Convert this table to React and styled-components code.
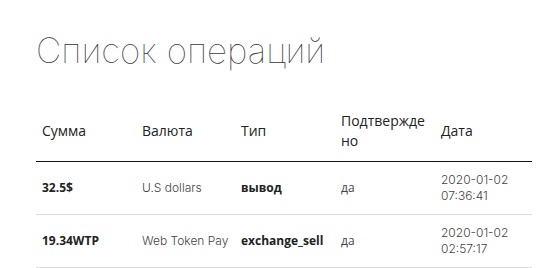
import React from "react";
import styled, { createGlobalStyle } from "styled-components";

const GlobalStyle = createGlobalStyle`
  body {
    margin: 0;
    background: #fff;
    font-family: "Open Sans", "Noto Sans", sans-serif;
  }
`;

const Page = styled.div`
  padding: 28px 26px 0 36px;
`;

const Title = styled.h1`
  margin: 0 0 29px;
  font-family: Inter, "Lato", sans-serif;
  font-weight: 100;
  font-size: 35px;
  line-height: 44px;
  color: #3a3a3a;
`;

const Table = styled.table`
  width: 496px;
  border-collapse: collapse;
  table-layout: fixed;
`;

const Head = styled.th`
  box-sizing: border-box;
  text-align: left;
  font-weight: 400;
  font-size: 14px;
  line-height: 20px;
  color: #222;
  padding: 10px 6px;
  border-bottom: 1.5px solid #111;
  word-break: break-all;
  width: ${(p) => p.w || "auto"};
`;

const Cell = styled.td`
  box-sizing: border-box;
  padding: 10px 6px;
  font-size: 12px;
  line-height: 16px;
  border-bottom: 1px solid #dcdcdc;
  color: ${(p) => (p.bold ? "#222" : "#444")};
  font-weight: ${(p) => (p.bold ? 700 : 400)};
  font-family: ${(p) =>
    p.light ? 'Inter, "Lato", sans-serif' : '"Open Sans", sans-serif'};
  ${(p) => p.light && "font-weight: 300;"}
`;

const rows = [
  { sum: "32.5$", cur: "U.S dollars", type: "вывод", ok: "да", date: "2020-01-02 07:36:41" },
  { sum: "19.34WTP", cur: "Web Token Pay", type: "exchange_sell", ok: "да", date: "2020-01-02 02:57:17" },
];

export default function App() {
  return (
    <>
      <GlobalStyle />
      <Page>
        <Title>Список операций</Title>
        <Table>
          <thead>
            <tr>
              <Head w="100px">Сумма</Head>
              <Head w="99px">Валюта</Head>
              <Head w="100px">Тип</Head>
              <Head w="100px">Подтверждено</Head>
              <Head>Дата</Head>
            </tr>
          </thead>
          <tbody>
            {rows.map((r) => (
              <tr key={r.sum}>
                <Cell bold>{r.sum}</Cell>
                <Cell light>{r.cur}</Cell>
                <Cell bold>{r.type}</Cell>
                <Cell>{r.ok}</Cell>
                <Cell light>{r.date}</Cell>
              </tr>
            ))}
          </tbody>
        </Table>
      </Page>
    </>
  );
}
